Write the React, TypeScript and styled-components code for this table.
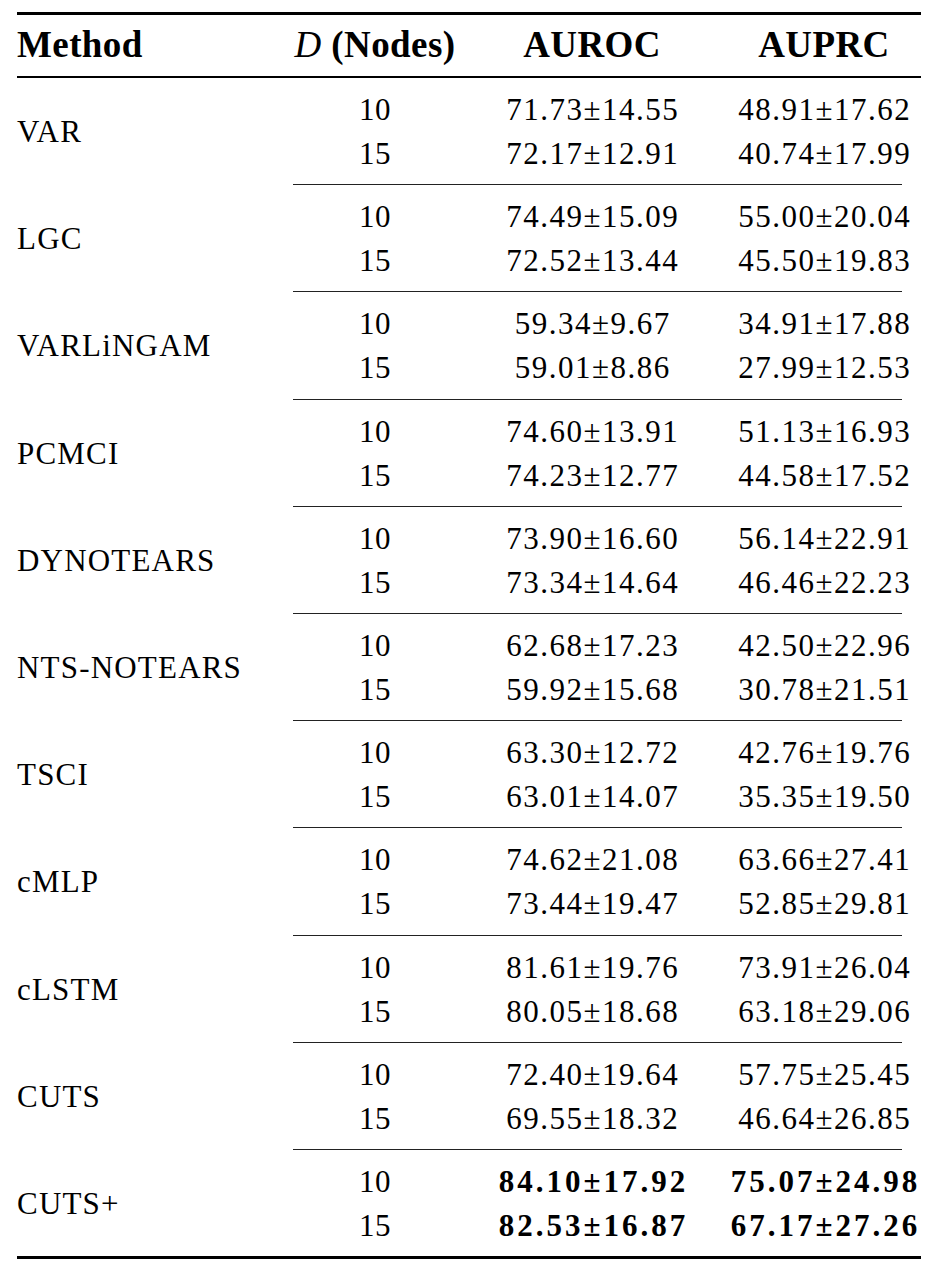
import React from "react";
import styled, { createGlobalStyle } from "styled-components";

const GlobalStyle = createGlobalStyle`
  html, body {
    margin: 0;
    padding: 0;
    background: #fff;
  }
  body {
    font-family: "Liberation Serif", "Times New Roman", serif;
    color: #000;
  }
`;

const COLUMNS = "276px 164px 270px 194px";

const Table = styled.div`
  width: 904px;
  margin: 12px 0 0 17px;
`;

const Rule = styled.div<{ $weight: number }>`
  height: ${(p) => p.$weight}px;
  background: #000;
`;

const HeaderRow = styled.div`
  display: grid;
  grid-template-columns: ${COLUMNS};
  height: 61px;
  line-height: 59px;
  padding-bottom: 2px;
  box-sizing: border-box;
  font-size: 37px;
  font-weight: 700;
  letter-spacing: 0.4px;
`;

const HeaderCell = styled.div<{ $align?: "left" | "center" }>`
  text-align: ${(p) => p.$align ?? "center"};
  white-space: nowrap;
`;

const MathVar = styled.em`
  font-weight: 400;
`;

const Group = styled.div`
  display: grid;
  grid-template-columns: ${COLUMNS};
  grid-template-rows: 44px 44px;
  padding: 10px 0 8.2px;
  line-height: 44px;
  font-size: 31px;
`;

const MethodCell = styled.div`
  grid-row: 1 / 3;
  align-self: center;
  letter-spacing: 1.2px;
  white-space: nowrap;
`;

const NodesCell = styled.div`
  text-align: center;
  letter-spacing: 0.5px;
`;

const ValueCell = styled.div<{ $bold?: boolean }>`
  text-align: center;
  white-space: nowrap;
  font-weight: ${(p) => (p.$bold ? 700 : 400)};
  letter-spacing: ${(p) => (p.$bold ? "3px" : "1.5px")};
  padding-left: ${(p) => (p.$bold ? "3px" : "1.5px")};
`;

const Divider = styled.div`
  height: 1px;
  margin: 0 19px 0 276px;
  background: #222;
`;

type Row = { nodes: number; auroc: string; auprc: string };
type Entry = { method: string; rows: Row[]; best?: boolean };

const DATA: Entry[] = [
  {
    method: "VAR",
    rows: [
      { nodes: 10, auroc: "71.73±14.55", auprc: "48.91±17.62" },
      { nodes: 15, auroc: "72.17±12.91", auprc: "40.74±17.99" },
    ],
  },
  {
    method: "LGC",
    rows: [
      { nodes: 10, auroc: "74.49±15.09", auprc: "55.00±20.04" },
      { nodes: 15, auroc: "72.52±13.44", auprc: "45.50±19.83" },
    ],
  },
  {
    method: "VARLiNGAM",
    rows: [
      { nodes: 10, auroc: "59.34±9.67", auprc: "34.91±17.88" },
      { nodes: 15, auroc: "59.01±8.86", auprc: "27.99±12.53" },
    ],
  },
  {
    method: "PCMCI",
    rows: [
      { nodes: 10, auroc: "74.60±13.91", auprc: "51.13±16.93" },
      { nodes: 15, auroc: "74.23±12.77", auprc: "44.58±17.52" },
    ],
  },
  {
    method: "DYNOTEARS",
    rows: [
      { nodes: 10, auroc: "73.90±16.60", auprc: "56.14±22.91" },
      { nodes: 15, auroc: "73.34±14.64", auprc: "46.46±22.23" },
    ],
  },
  {
    method: "NTS-NOTEARS",
    rows: [
      { nodes: 10, auroc: "62.68±17.23", auprc: "42.50±22.96" },
      { nodes: 15, auroc: "59.92±15.68", auprc: "30.78±21.51" },
    ],
  },
  {
    method: "TSCI",
    rows: [
      { nodes: 10, auroc: "63.30±12.72", auprc: "42.76±19.76" },
      { nodes: 15, auroc: "63.01±14.07", auprc: "35.35±19.50" },
    ],
  },
  {
    method: "cMLP",
    rows: [
      { nodes: 10, auroc: "74.62±21.08", auprc: "63.66±27.41" },
      { nodes: 15, auroc: "73.44±19.47", auprc: "52.85±29.81" },
    ],
  },
  {
    method: "cLSTM",
    rows: [
      { nodes: 10, auroc: "81.61±19.76", auprc: "73.91±26.04" },
      { nodes: 15, auroc: "80.05±18.68", auprc: "63.18±29.06" },
    ],
  },
  {
    method: "CUTS",
    rows: [
      { nodes: 10, auroc: "72.40±19.64", auprc: "57.75±25.45" },
      { nodes: 15, auroc: "69.55±18.32", auprc: "46.64±26.85" },
    ],
  },
  {
    method: "CUTS+",
    best: true,
    rows: [
      { nodes: 10, auroc: "84.10±17.92", auprc: "75.07±24.98" },
      { nodes: 15, auroc: "82.53±16.87", auprc: "67.17±27.26" },
    ],
  },
];

export default function App() {
  return (
    <>
      <GlobalStyle />
      <Table>
        <Rule $weight={3} />
        <HeaderRow>
          <HeaderCell $align="left">Method</HeaderCell>
          <HeaderCell>
            <MathVar>D</MathVar> (Nodes)
          </HeaderCell>
          <HeaderCell>AUROC</HeaderCell>
          <HeaderCell>AUPRC</HeaderCell>
        </HeaderRow>
        <Rule $weight={2} />
        {DATA.map((entry, i) => (
          <React.Fragment key={entry.method}>
            {i > 0 && <Divider />}
            <Group>
              <MethodCell>{entry.method}</MethodCell>
              {entry.rows.map((row) => (
                <React.Fragment key={row.nodes}>
                  <NodesCell>{row.nodes}</NodesCell>
                  <ValueCell $bold={entry.best}>{row.auroc}</ValueCell>
                  <ValueCell $bold={entry.best}>{row.auprc}</ValueCell>
                </React.Fragment>
              ))}
            </Group>
          </React.Fragment>
        ))}
        <Rule $weight={3} />
      </Table>
    </>
  );
}
